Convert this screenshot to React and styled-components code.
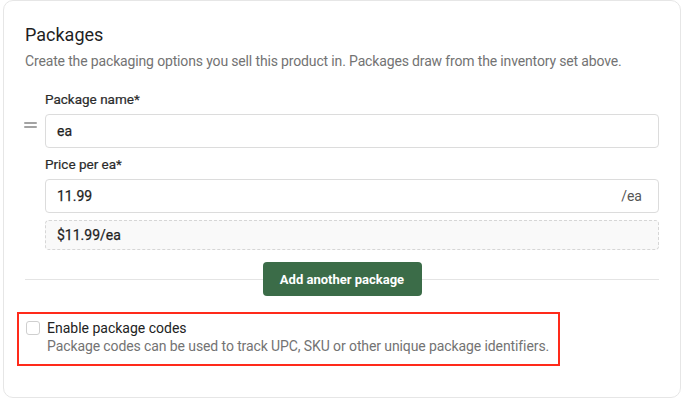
import React from "react";
import styled, { createGlobalStyle } from "styled-components";

const GlobalStyle = createGlobalStyle`
  * {
    box-sizing: border-box;
  }
  body {
    margin: 0;
    background: #ffffff;
    font-family: Roboto, Inter, "Noto Sans", sans-serif;
    color: #222222;
  }
`;

const Card = styled.section`
  margin: 0 7px 0 3px;
  height: 398px;
  padding: 23px 21px 0 21px;
  border: 1px solid #e6e6e6;
  border-radius: 10px;
  background: #ffffff;
`;

const Title = styled.h2`
  margin: 0;
  font-size: 18px;
  line-height: 22px;
  font-weight: 400;
  color: #1f1f1f;
`;

const Intro = styled.p`
  margin: 5px 0 0;
  font-size: 14px;
  line-height: 20px;
  letter-spacing: -0.15px;
  color: #737373;
`;

const PackageRow = styled.div`
  display: flex;
  align-items: flex-start;
  margin-top: 19px;
`;

const Handle = styled.div`
  width: 21px;
  flex: none;
  display: flex;
  flex-direction: column;
  gap: 2px;
  padding-top: 32px;
  padding-right: 8px;
  margin-left: -1px;

  span {
    display: block;
    height: 2px;
    background: #a3a3a3;
    border-radius: 1px;
  }
`;

const Fields = styled.div`
  flex: 1;
  display: flex;
  flex-direction: column;
  gap: 7px;
`;

const Field = styled.div`
  display: flex;
  flex-direction: column;
  gap: 6px;
`;

const Label = styled.label`
  font-size: 13.5px;
  line-height: 18px;
  font-weight: 400;
  color: #2b2b2b;
  -webkit-text-stroke: 0.2px #2b2b2b;
`;

const InputBox = styled.div`
  display: flex;
  align-items: center;
  justify-content: space-between;
  height: 34px;
  padding: 0 16px 0 11px;
  border: 1px solid #dcdcdc;
  border-radius: 4px;
  background: #ffffff;
  font-size: 14px;
  font-weight: 400;
  color: #1f1f1f;
  -webkit-text-stroke: 0.25px #1f1f1f;
`;

const Suffix = styled.span`
  color: #555555;
  -webkit-text-stroke: 0;
`;

const Preview = styled.div`
  display: flex;
  align-items: center;
  height: 30px;
  padding: 0 11px;
  border: 1px dashed #d6d6d6;
  border-radius: 4px;
  background: #f9f9f9;
  font-size: 14px;
  font-weight: 400;
  color: #1f1f1f;
  -webkit-text-stroke: 0.25px #1f1f1f;
`;

const DividerRow = styled.div`
  position: relative;
  display: flex;
  justify-content: center;
  margin-top: 12px;

  &::before {
    content: "";
    position: absolute;
    left: 0;
    right: 0;
    top: 17px;
    height: 1px;
    background: #e4e4e4;
  }
`;

const AddButton = styled.button`
  position: relative;
  height: 34px;
  width: 159px;
  padding: 0;
  border: none;
  border-radius: 4px;
  background: #3b6c48;
  color: #ffffff;
  font-family: inherit;
  font-size: 13px;
  font-weight: 700;
`;

const Highlight = styled.div`
  display: flex;
  align-items: flex-start;
  gap: 7px;
  width: fit-content;
  margin: 16px 0 0 -8px;
  padding: 5px 9px 9px 7px;
  border: 2px solid #ff2a1a;
`;

const Checkbox = styled.span`
  flex: none;
  width: 14px;
  height: 14px;
  margin-top: 2px;
  border: 1px solid #cfcfcf;
  border-radius: 3px;
  background: #ffffff;
`;

const OptionText = styled.div`
  display: flex;
  flex-direction: column;
  font-size: 14px;
  line-height: 18px;
`;

const OptionTitle = styled.span`
  font-weight: 400;
  color: #222222;
`;

const OptionHint = styled.span`
  letter-spacing: -0.1px;
  color: #737373;
`;

export default function App() {
  return (
    <>
      <GlobalStyle />
      <Card>
        <Title>Packages</Title>
        <Intro>
          Create the packaging options you sell this product in. Packages draw
          from the inventory set above.
        </Intro>
        <PackageRow>
          <Handle>
            <span />
            <span />
          </Handle>
          <Fields>
            <Field>
              <Label>Package name*</Label>
              <InputBox>ea</InputBox>
            </Field>
            <Field>
              <Label>Price per ea*</Label>
              <InputBox>
                11.99
                <Suffix>/ea</Suffix>
              </InputBox>
            </Field>
            <Preview>$11.99/ea</Preview>
          </Fields>
        </PackageRow>
        <DividerRow>
          <AddButton>Add another package</AddButton>
        </DividerRow>
        <Highlight>
          <Checkbox />
          <OptionText>
            <OptionTitle>Enable package codes</OptionTitle>
            <OptionHint>
              Package codes can be used to track UPC, SKU or other unique
              package identifiers.
            </OptionHint>
          </OptionText>
        </Highlight>
      </Card>
    </>
  );
}
